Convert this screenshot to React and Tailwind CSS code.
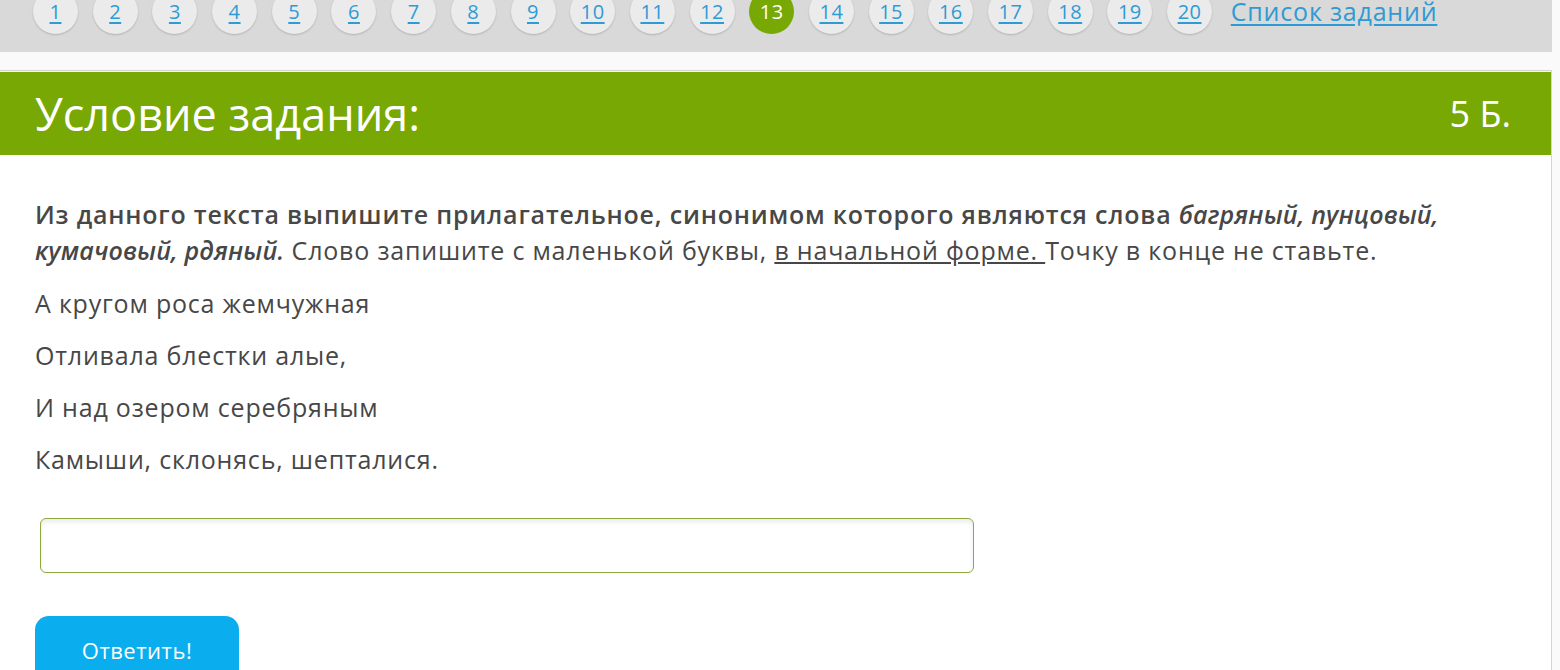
import { useState } from "react";

const TASKS = Array.from({ length: 20 }, (_, i) => i + 1);
const CURRENT = 13;

const POEM = [
  "А кругом роса жемчужная",
  "Отливала блестки алые,",
  "И над озером серебряным",
  "Камыши, склонясь, шепталися.",
];

export default function App() {
  const [answer, setAnswer] = useState("");

  return (
    <div className="h-[670px] overflow-hidden bg-[#fafafa] font-['Open_Sans',sans-serif] text-[#474747]">
      {/* Task navigation */}
      <div className="flex items-start w-[1552px] h-[52px] bg-[#d9d9d9]">
        <div className="flex items-center gap-[14.7px] pl-[33px] -mt-[11px]">
          {TASKS.map((n) =>
            n === CURRENT ? (
              <span
                key={n}
                className="w-[45px] h-[45px] rounded-full bg-[#77a803] text-white text-[20px] tracking-[0.5px] flex items-center justify-center shrink-0"
              >
                {n}
              </span>
            ) : (
              <a
                key={n}
                href="#"
                className="w-[45px] h-[45px] rounded-full bg-[#ebebeb] shadow-[0_1px_2px_rgba(0,0,0,0.18)] text-[#2e9bd4] text-[20px] tracking-[0.5px] underline underline-offset-[3px] flex items-center justify-center shrink-0"
              >
                {n}
              </a>
            )
          )}
          <a href="#" className="ml-[4px] text-[#2e9bd4] text-[25px] tracking-[0.8px] underline underline-offset-[3px]">
            Список заданий
          </a>
        </div>
      </div>

      {/* Task card */}
      <div className="mt-[18px] w-[1552px] bg-white border border-l-0 border-[#d4d4d4]">
        <div className="h-[84px] bg-[#77a803] border-t border-[#f4f4f4] flex items-center justify-between pl-[35px] pr-[40px] text-white">
          <h1 className="text-[45px] leading-none">Условие задания:</h1>
          <span className="text-[36px] leading-none">5 Б.</span>
        </div>

        <div className="px-[35px] pt-[41px] pb-[40px] text-[25px] leading-[36px] tracking-[0.8px]">
          <p className="mb-[17px]">
            <b className="font-semibold">
              Из данного текста выпишите прилагательное, синонимом которого являются слова{" "}
              <i className="tracking-[0.15px]">багряный, пунцовый, кумачовый, рдяный.</i>
            </b>{" "}
            Слово запишите с маленькой буквы, <u>в начальной форме. </u>Точку в конце не ставьте.
          </p>
          {POEM.map((line) => (
            <p key={line} className="mb-[16px]">
              {line}
            </p>
          ))}

          <input
            value={answer}
            onChange={(e) => setAnswer(e.target.value)}
            className="block mt-[41px] ml-[5px] w-[934px] h-[55px] rounded-[6px] border border-[#8fa83e] bg-white shadow-[inset_0_3px_5px_rgba(0,0,0,0.08)] px-3 text-[22px] outline-none"
          />

          <button className="mt-[43px] w-[204px] h-[68px] rounded-[14px] bg-[#0aaeef] text-white text-[22px] tracking-[0.5px]">
            Ответить!
          </button>
        </div>
      </div>
    </div>
  );
}
